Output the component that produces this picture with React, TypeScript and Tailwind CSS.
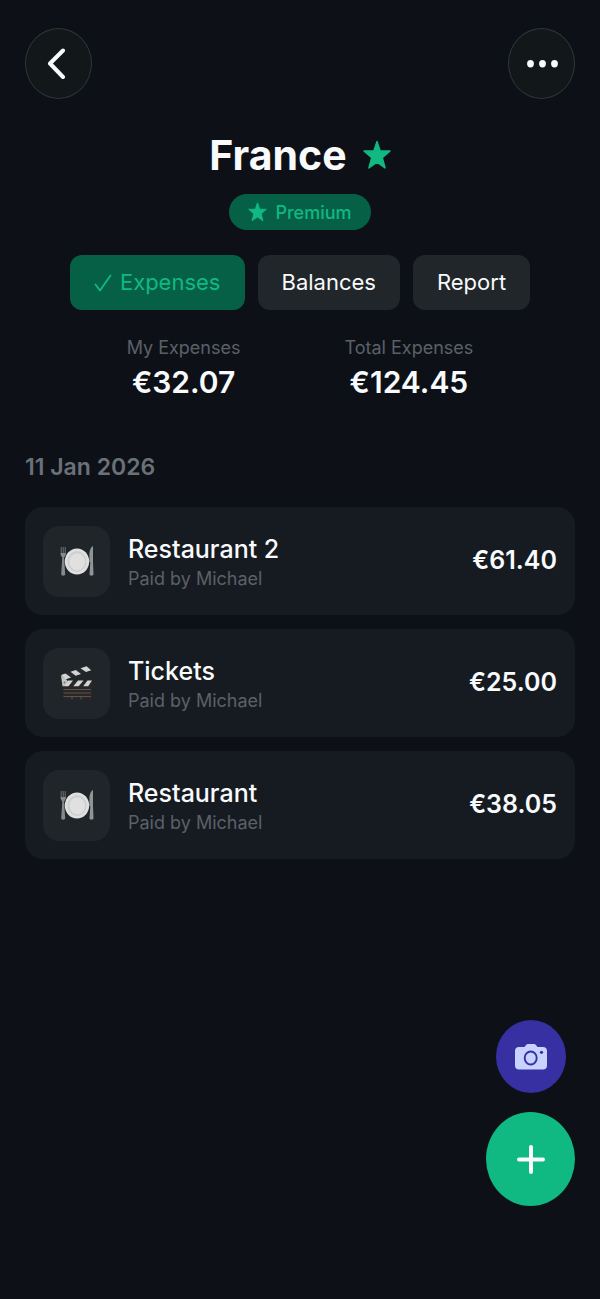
import { useState } from "react";
import { cva } from "class-variance-authority";

type Category = "food" | "movies";

interface Expense {
  title: string;
  paidBy: string;
  amount: string;
  category: Category;
}

const tabs = ["Expenses", "Balances", "Report"];

const expenses: Expense[] = [
  { title: "Restaurant 2", paidBy: "Michael", amount: "€61.40", category: "food" },
  { title: "Tickets", paidBy: "Michael", amount: "€25.00", category: "movies" },
  { title: "Restaurant", paidBy: "Michael", amount: "€38.05", category: "food" },
];

const tabStyle = cva("flex h-[55px] items-center gap-2 rounded-xl px-6 text-[22px]", {
  variants: {
    active: {
      true: "bg-[#066046] text-[#10b981]",
      false: "bg-[#202629] text-slate-50",
    },
  },
});

function Star({ className }: { className: string }) {
  return (
    <svg viewBox="0 0 28 29" className={className} fill="currentColor" stroke="currentColor" strokeWidth="1.4" strokeLinejoin="round" aria-hidden="true">
      <path d="M14 1l3.2 9.500H27l-7.700 6.600 2.800 10.400L14 21.800l-8.100 5.700 2.800-10.400L1 10.500h9.800z" />
    </svg>
  );
}

function PlateIcon() {
  return (
    <svg viewBox="0 0 36 34" className="h-[34px] w-9" aria-hidden="true">
      {/* fork */}
      <path d="M2.200 3v8M4.200 3v8M6.200 3v8" stroke="#6f7377" strokeWidth="1" fill="none" />
      <path d="M1.700 9h5c0 2.500-.8 3.800-1.600 4.400L6.200 30.500c0 1.500-4 1.500-4 0l1.100-17.100C2.500 12.800 1.700 11.500 1.700 9z" fill="#85898d" />
      {/* knife */}
      <path d="M34 2c-2.200 1-3.600 4.500-3.600 9v7h.9L30.500 30.500c0 1.500 4 1.500 4 0L34 18z" fill="#909397" />
      <ellipse cx="18" cy="17.500" rx="12.200" ry="13" fill="#dfe0e0" />
      <ellipse cx="18" cy="17.500" rx="9" ry="9.800" fill="#d2d4d4" stroke="#c4c7c7" strokeWidth=".8" />
      <ellipse cx="18.300" cy="18" rx="7.800" ry="8.500" fill="#dfe0df" />
    </svg>
  );
}

function ClapperIcon() {
  return (
    <svg viewBox="0 0 36 38" className="h-[38px] w-9" aria-hidden="true">
      <path d="M4 22h28.500v13.500H4z" fill="#2b2625" />
      <path d="M4.500 25.500h27.500M4.500 29h27.500M4.500 32.500h27.500" stroke="#5f5955" strokeWidth=".9" />
      <path d="M13 32.500v3M22 32.500v3" stroke="#5f5955" strokeWidth=".9" />
      {/* hinged arm */}
      <path d="M2 11L31 1l1.500 5L3.500 16.500z" fill="#25292b" />
      <path d="M2 11l4.500-1.500 5.500 4-5.800 2zM11.500 7.800l5.300-1.900 5.200 4-5.300 1.900zM21.500 4.300l6-2.100 4.700 4-5.200 1.800z" fill="#d3d4d2" />
      {/* fixed bar */}
      <path d="M4 16.500h29v5.800H4z" fill="#25292b" />
      <path d="M9 16.500h5l-4.500 5.800h-5zM19 16.500h5.500l-4.800 5.800h-5.400zM28.500 16.500H33l-3.800 5.800h-5z" fill="#d3d4d2" />
      <path d="M2 11.500l6 4.500.5 2-4 4.300H3.500z" fill="#c4c6c3" />
      <circle cx="5.500" cy="18.500" r="1" fill="#77797a" />
    </svg>
  );
}

function ExpenseRow({ title, paidBy, amount, category }: Expense) {
  return (
    <li className="flex h-[108px] items-center rounded-[18px] bg-[#161b21] px-[18px]">
      <div className="flex h-[71px] w-[67px] shrink-0 items-center justify-center rounded-2xl bg-[#1f2528]">
        {category === "food" ? <PlateIcon /> : <ClapperIcon />}
      </div>
      <div className="ml-[18px] min-w-0 flex-1 pt-1">
        <h3 className="text-[25px] leading-8 font-medium">{title}</h3>
        <p className="text-[18px] leading-7 text-[#5b6067]">Paid by {paidBy}</p>
      </div>
      <span className="text-[25px] font-semibold">{amount}</span>
    </li>
  );
}

function Total({ label, amount }: { label: string; amount: string }) {
  return (
    <div className="text-center">
      <p className="text-[18px] leading-7 text-[#5b6067]">{label}</p>
      <p className="text-[30px] leading-10 font-semibold">{amount}</p>
    </div>
  );
}

export default function App() {
  const [tab, setTab] = useState("Expenses");

  return (
    <div className="min-h-screen bg-[#0d1117] px-[25px] pt-7 font-['Inter',sans-serif] text-slate-50">
      <header className="flex justify-between">
        <button aria-label="Back" className="flex h-[71px] w-[67px] items-center justify-center rounded-[50%] border border-[#30363a] bg-[#12171a]">
          <svg viewBox="0 0 20 32" className="mr-1 h-8 w-5" fill="none" stroke="currentColor" strokeWidth="4" strokeLinecap="round" strokeLinejoin="round" aria-hidden="true">
            <path d="M16 2.500L3 15.500l13 13.500" />
          </svg>
        </button>
        <button aria-label="More" className="flex h-[71px] w-[67px] items-center justify-center rounded-[50%] border border-[#30363a] bg-[#12171a]">
          <svg viewBox="0 0 32 8" className="h-2 w-8" fill="currentColor" aria-hidden="true">
            <ellipse cx="4.500" cy="3.700" rx="3.400" ry="3.700" />
            <ellipse cx="16.500" cy="3.700" rx="3.400" ry="3.700" />
            <ellipse cx="28.500" cy="3.700" rx="3.400" ry="3.700" />
          </svg>
        </button>
      </header>

      <div className="mt-[31px] flex flex-col items-center">
        <h1 className="flex items-center gap-4 text-[41px] leading-[50px] font-bold">
          France
          <Star className="h-[30px] w-7 text-[#10b981]" />
        </h1>
        <span className="mt-[14px] flex h-9 items-center gap-2 rounded-full bg-[#066046] px-[19px] text-[18px] font-medium text-[#10b981]">
          <Star className="h-5 w-[19px]" />
          Premium
        </span>
      </div>

      <nav className="mt-[25px] flex justify-center gap-[13px]">
        {tabs.map((name) => (
          <button key={name} onClick={() => setTab(name)} aria-pressed={tab === name} className={tabStyle({ active: tab === name })}>
            {tab === name && (
              <svg viewBox="0 0 18 18" className="h-[18px] w-[18px]" fill="none" stroke="currentColor" strokeWidth="1.8" strokeLinecap="round" strokeLinejoin="round" aria-hidden="true">
                <path d="M1.500 10.500l4.500 6L16.500 1.500" />
              </svg>
            )}
            {name}
          </button>
        ))}
      </nav>

      <section className="mt-6 flex justify-center gap-[104px]">
        <Total label="My Expenses" amount="€32.07" />
        <Total label="Total Expenses" amount="€124.45" />
      </section>

      <main className="mt-[49px] pb-[260px]">
        <h2 className="text-[23px] leading-8 font-semibold text-[#6b7178]">11 Jan 2026</h2>
        <ul className="mt-6 flex flex-col gap-[14px]">
          {expenses.map((expense) => (
            <ExpenseRow key={expense.title} {...expense} />
          ))}
        </ul>
      </main>

      {/* Floating actions */}
      <div className="fixed right-[25px] bottom-[93px] flex flex-col items-center gap-[19px]">
        <button aria-label="Scan receipt" className="flex h-[73px] w-[70px] items-center justify-center rounded-[50%] bg-[#3730a3]">
          <svg viewBox="0 0 32 28" className="h-7 w-8" aria-hidden="true">
            <path d="M4 4h4.500c1 0 1.500-.4 2-1.200C11.200 1.500 12 1 13.500 1h5c1.500 0 2.300.5 3 1.800.5.800 1 1.200 2 1.200H28c2.500 0 4 1.500 4 4v14.500c0 2.500-1.500 4-4 4H4c-2.500 0-4-1.500-4-4V8c0-2.500 1.500-4 4-4z" fill="#c7d2fe" />
            <ellipse cx="15.700" cy="15" rx="6" ry="6.500" fill="none" stroke="#3730a3" strokeWidth="1.900" />
            <circle cx="26.500" cy="9.300" r="1.600" fill="#3730a3" />
          </svg>
        </button>
        <button aria-label="Add expense" className="flex h-[94px] w-[89px] items-center justify-center rounded-[50%] bg-[#10b981]">
          <svg viewBox="0 0 30 30" className="h-[30px] w-[30px]" stroke="currentColor" strokeWidth="4" strokeLinecap="round" aria-hidden="true">
            <path d="M15 3v25M3 15.500h24" />
          </svg>
        </button>
      </div>
    </div>
  );
}
